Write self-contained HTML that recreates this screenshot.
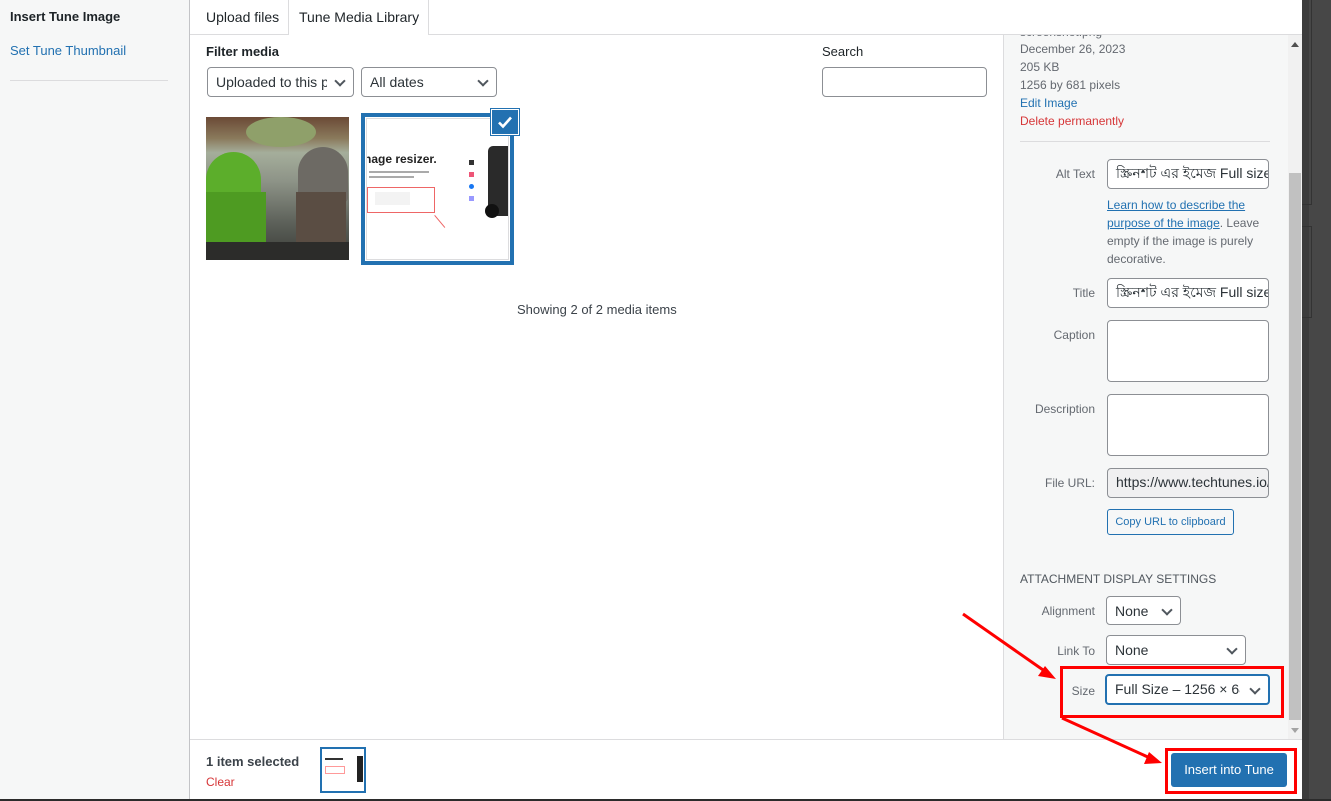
<!DOCTYPE html>
<html><head><meta charset="utf-8">
<style>
*{box-sizing:border-box;margin:0;padding:0}
body{width:1331px;height:801px;overflow:hidden;position:relative;font-family:"Liberation Sans","Noto Sans CJK SC",sans-serif;font-size:13px;color:#1d2327;background:#fff}
.a{position:absolute}
.sel{position:absolute;border:1px solid #8c8f94;border-radius:4px;background:#fff;font-size:14px;color:#2c3338;line-height:28px;white-space:nowrap;overflow:hidden}
.sel .t{position:absolute;left:8px;right:26px;top:0;overflow:hidden;white-space:nowrap}
.sel .ch{position:absolute;right:9px;top:9px;width:8px;height:8px;border-right:2px solid #50575e;border-bottom:2px solid #50575e;transform:rotate(45deg)}
.inp{position:absolute;border:1px solid #8c8f94;border-radius:4px;background:#fff;font-size:14px;padding:0 8px;line-height:27px;white-space:nowrap;overflow:hidden;color:#2c3338}
.lbl{position:absolute;right:236px;font-size:12px;color:#646970;text-align:right}
.meta{position:absolute;left:1020px;font-size:12px;color:#646970}
</style></head><body>
<div class="a" style="left:0;top:0;width:190px;height:801px;background:#f6f7f7;border-right:1px solid #c3c4c7"></div>
<div class="a" style="left:10px;top:9px;font-size:13px;font-weight:bold;color:#1d2327">Insert Tune Image</div>
<div class="a" style="left:10px;top:43px;font-size:13px;color:#2271b1">Set Tune Thumbnail</div>
<div class="a" style="left:10px;top:80px;width:158px;height:1px;background:#dcdcde"></div>
<div class="a" style="left:190px;top:34px;width:1112px;height:1px;background:#dcdcde"></div>
<div class="a" style="left:206px;top:9px;font-size:14px;color:#1d2327">Upload files</div>
<div class="a" style="left:288px;top:0;width:141px;height:35px;border:1px solid #dcdcde;border-top:none;border-bottom:none;background:#fff"></div>
<div class="a" style="left:299px;top:9px;font-size:14px;color:#1d2327">Tune Media Library</div>
<div class="a" style="left:206px;top:44px;font-size:13px;font-weight:bold;color:#1d2327">Filter media</div>
<div class="sel" style="left:207px;top:67px;width:147px;height:30px"><span class="t">Uploaded to this post</span><span class="ch"></span></div>
<div class="sel" style="left:361px;top:67px;width:136px;height:30px"><span class="t">All dates</span><span class="ch"></span></div>
<div class="a" style="left:822px;top:44px;font-size:13px;color:#1d2327">Search</div>
<div class="inp" style="left:822px;top:67px;width:165px;height:30px"></div>
<div class="a" style="left:206px;top:117px;width:143px;height:143px;background:linear-gradient(180deg,#6b4a36 0%,#8a7a5c 15%,#a5ae9b 25%,#8d9387 45%,#5b5f58 75%,#3a3c38 100%);overflow:hidden">
 <div class="a" style="left:40px;top:0;width:70px;height:30px;border-radius:50%;background:#8fa06a"></div>
 <div class="a" style="left:0;top:35px;width:55px;height:55px;border-radius:28px 28px 4px 4px;background:#5cae2b"></div>
 <div class="a" style="left:0;top:75px;width:60px;height:50px;background:#4e9b22"></div>
 <div class="a" style="left:92px;top:30px;width:50px;height:55px;border-radius:26px 26px 4px 4px;background:#6d6a64"></div>
 <div class="a" style="left:90px;top:75px;width:50px;height:50px;background:#5a4d43"></div>
 <div class="a" style="left:0;top:125px;width:143px;height:18px;background:#2c2c2a"></div>
</div>
<div class="a" style="left:361px;top:113px;width:153px;height:152px;border:4px solid #2271b1;background:#fff">
 <div class="a" style="left:1px;top:1px;width:143px;height:142px;border:1px solid #dcdcde;overflow:hidden">
  <div class="a" style="left:-3px;top:33px;font-size:12px;font-weight:bold;color:#222;white-space:nowrap">nage resizer.</div>
  <div class="a" style="left:2px;top:52px;width:60px;height:2px;background:#aaa"></div>
  <div class="a" style="left:2px;top:57px;width:45px;height:2px;background:#aaa"></div>
  <div class="a" style="left:0;top:68px;width:68px;height:26px;border:1px solid #e66"></div>
  <div class="a" style="left:8px;top:73px;width:35px;height:13px;background:#f3f3f3"></div>
  <div class="a" style="left:102px;top:41px;width:5px;height:5px;background:#333"></div>
  <div class="a" style="left:102px;top:53px;width:5px;height:5px;background:#e57"></div>
  <div class="a" style="left:102px;top:65px;width:5px;height:5px;border-radius:50%;background:#1877f2"></div>
  <div class="a" style="left:102px;top:77px;width:5px;height:5px;background:#99f"></div>
  <div class="a" style="left:121px;top:27px;width:25px;height:70px;border-radius:5px;background:#2a2a2a"></div>
  <div class="a" style="left:118px;top:85px;width:14px;height:14px;border-radius:50%;background:#111"></div>
  <div class="a" style="left:68px;top:96px;width:16px;height:1px;background:#e66;transform:rotate(50deg);transform-origin:0 0"></div>
 </div>
</div>
<div class="a" style="left:491px;top:109px;width:28px;height:26px;background:#2271b1;border:1px solid #fff;box-shadow:0 0 0 1px #2271b1"></div>
<svg class="a" style="left:496px;top:113px" width="18" height="18" viewBox="0 0 18 18"><path d="M3 9.5l4 4 8-9" stroke="#fff" stroke-width="2.6" fill="none"/></svg>
<div class="a" style="left:517px;top:302px;font-size:13px;color:#3c434a">Showing 2 of 2 media items</div>
<div class="a" style="left:1003px;top:35px;width:285px;height:704px;background:#f6f7f7;border-left:1px solid #dcdcde;overflow:hidden">
 <div class="a" style="left:16px;top:-10px;font-size:12px;color:#646970">screenshot.png</div>
</div>
<div class="meta" style="top:42px">December 26, 2023</div>
<div class="meta" style="top:60px">205 KB</div>
<div class="meta" style="top:78px">1256 by 681 pixels</div>
<div class="meta" style="top:96px;color:#2271b1">Edit Image</div>
<div class="meta" style="top:114px;color:#d63638">Delete permanently</div>
<div class="a" style="left:1020px;top:141px;width:250px;height:1px;background:#dcdcde"></div>
<div class="lbl" style="top:167px">Alt Text</div>
<div class="inp" style="left:1107px;top:159px;width:162px;height:30px">স্ক্রিনশট এর ইমেজ Full size</div>
<div class="a" style="left:1107px;top:196px;width:165px;font-size:12px;line-height:18px;color:#646970"><span style="color:#2271b1;text-decoration:underline">Learn how to describe the purpose of the image</span>. Leave empty if the image is purely decorative.</div>
<div class="lbl" style="top:286px">Title</div>
<div class="inp" style="left:1107px;top:278px;width:162px;height:30px">স্ক্রিনশট এর ইমেজ Full size</div>
<div class="lbl" style="top:328px">Caption</div>
<div class="inp" style="left:1107px;top:320px;width:162px;height:62px"></div>
<div class="lbl" style="top:402px">Description</div>
<div class="inp" style="left:1107px;top:394px;width:162px;height:62px"></div>
<div class="lbl" style="top:476px">File URL:</div>
<div class="inp" style="left:1107px;top:468px;width:162px;height:30px;background:#f0f0f1">https://www.techtunes.io/</div>
<div class="a" style="left:1107px;top:509px;width:127px;height:26px;border:1px solid #2271b1;border-radius:3px;background:#f6f7f7;color:#2271b1;font-size:11px;line-height:24px;text-align:center">Copy URL to clipboard</div>
<div class="a" style="left:1020px;top:572px;font-size:12px;color:#50575e">ATTACHMENT DISPLAY SETTINGS</div>
<div class="lbl" style="top:604px">Alignment</div>
<div class="sel" style="left:1106px;top:596px;width:75px;height:29px"><span class="t">None</span><span class="ch"></span></div>
<div class="lbl" style="top:644px">Link To</div>
<div class="sel" style="left:1106px;top:635px;width:140px;height:30px"><span class="t">None</span><span class="ch"></span></div>
<div class="lbl" style="top:684px">Size</div>
<div class="sel" style="left:1105px;top:674px;width:165px;height:31px;border:2px solid #2271b1;line-height:27px"><span class="t" style="right:28px">Full Size – 1256 × 681</span><span class="ch"></span></div>
<div class="a" style="left:1288px;top:35px;width:14px;height:704px;background:#f1f1f1"></div>
<div class="a" style="left:1289px;top:173px;width:12px;height:547px;background:#c1c1c1"></div>
<div class="a" style="left:1291px;top:42px;width:0;height:0;border-left:4px solid transparent;border-right:4px solid transparent;border-bottom:5px solid #505050"></div>
<div class="a" style="left:1291px;top:728px;width:0;height:0;border-left:4px solid transparent;border-right:4px solid transparent;border-top:5px solid #a3a3a3"></div>
<div class="a" style="left:190px;top:739px;width:1112px;height:1px;background:#dcdcde"></div>
<div class="a" style="left:206px;top:754px;font-size:13px;font-weight:bold;color:#3c434a">1 item selected</div>
<div class="a" style="left:206px;top:775px;font-size:12px;color:#d63638">Clear</div>
<div class="a" style="left:320px;top:747px;width:46px;height:46px;border:2px solid #2271b1;background:#fff">
 <div class="a" style="left:3px;top:9px;width:18px;height:2px;background:#333"></div>
 <div class="a" style="left:3px;top:17px;width:20px;height:8px;border:1px solid #f99"></div>
 <div class="a" style="left:35px;top:7px;width:6px;height:26px;background:#222"></div>
</div>
<div class="a" style="left:1171px;top:753px;width:116px;height:34px;background:#2271b1;border-radius:3px;color:#fff;font-size:13px;line-height:34px;text-align:center">Insert into Tune</div>
<div class="a" style="left:1060px;top:666px;width:224px;height:52px;border:3px solid #f00"></div>
<div class="a" style="left:1165px;top:748px;width:132px;height:46px;border:3px solid #f00"></div>
<svg class="a" style="left:0;top:0" width="1331" height="801">
 <line x1="963" y1="614" x2="1046" y2="672" stroke="#f00" stroke-width="3"/>
 <polygon points="1056,679 1038,676 1045,666" fill="#f00"/>
 <line x1="1062" y1="718" x2="1150" y2="758" stroke="#f00" stroke-width="3"/>
 <polygon points="1162,763 1144,764 1149,752" fill="#f00"/>
</svg>
<div class="a" style="left:1302px;top:0;width:29px;height:801px;background:#474747"></div>
<div class="a" style="left:1302px;top:0;width:7px;height:801px;background:#3c3c3c"></div>
<div class="a" style="left:1302px;top:0;width:10px;height:205px;border-right:1px solid #333;border-bottom:1px solid #333"></div>
<div class="a" style="left:1302px;top:226px;width:10px;height:92px;border:1px solid #333;border-left:none"></div>
<div class="a" style="left:0;top:799px;width:1331px;height:2px;background:#2b2b2b"></div>
</body></html>
